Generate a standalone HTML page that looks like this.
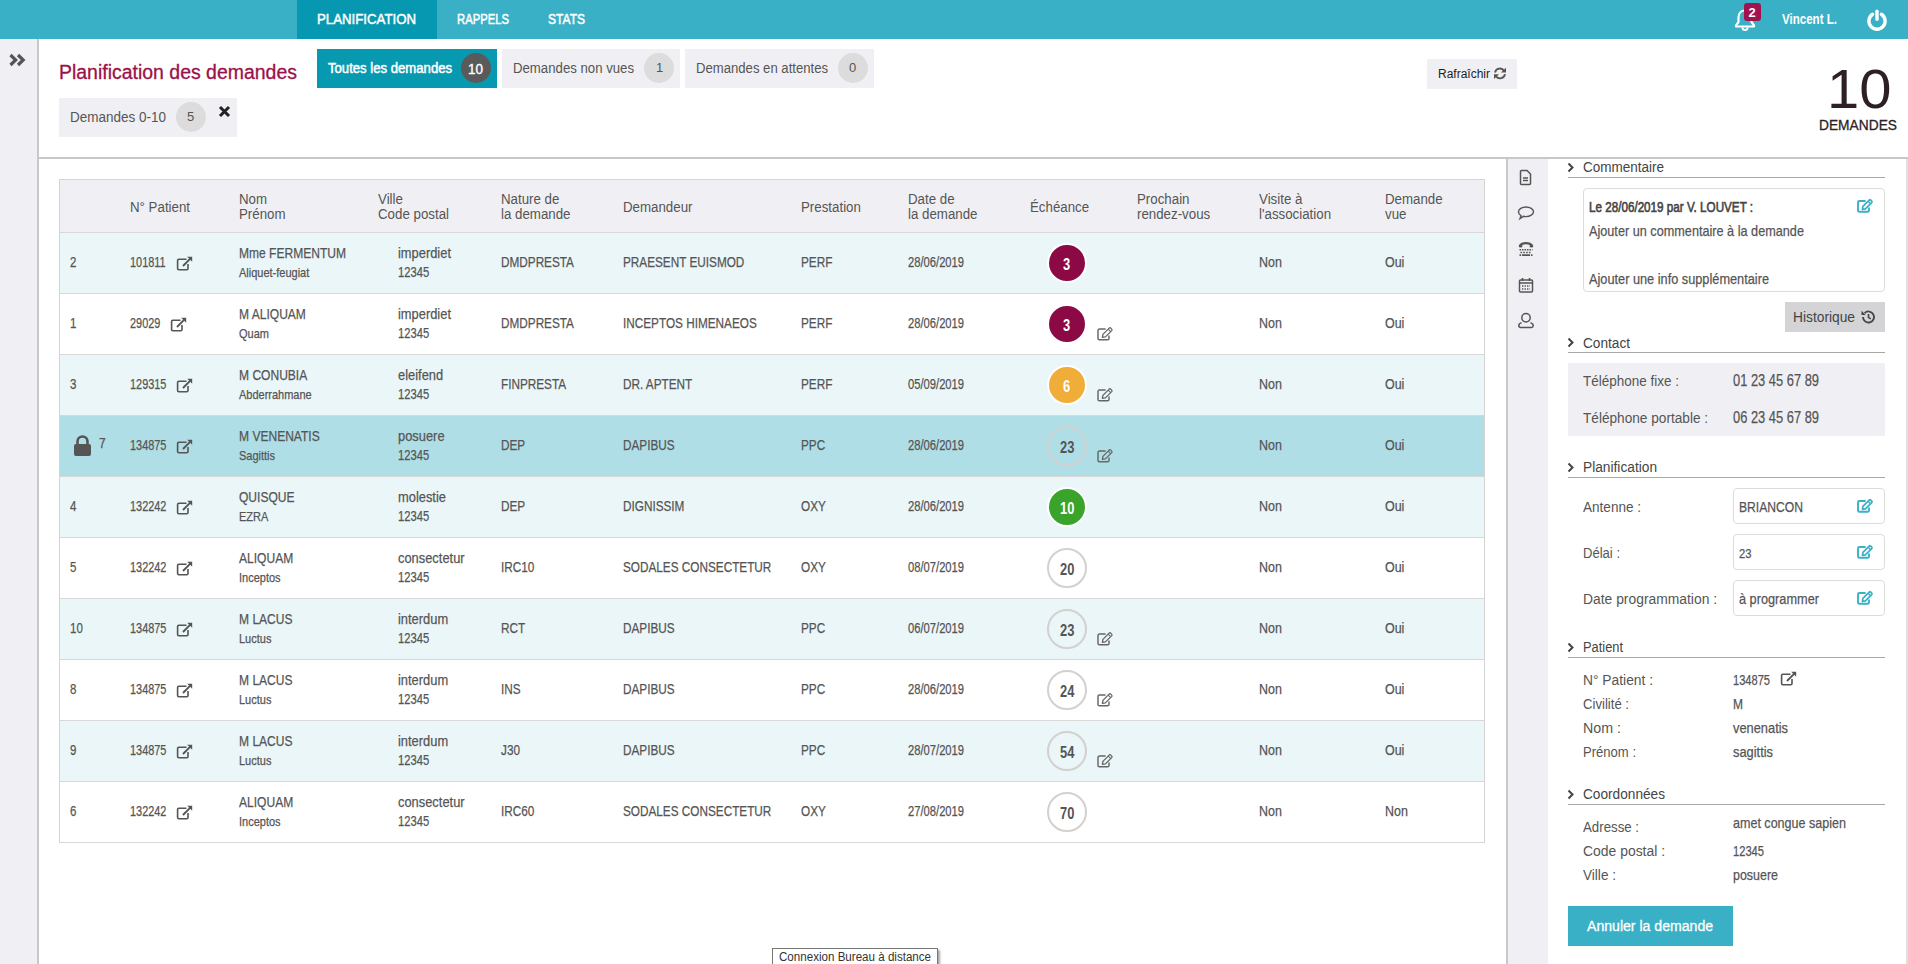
<!DOCTYPE html>
<html><head><meta charset="utf-8"><title>Planification</title>
<style>
html,body{margin:0;padding:0;}
body{width:1908px;height:964px;overflow:hidden;position:relative;background:#fff;font-family:"Liberation Sans",sans-serif;}
.t{position:absolute;white-space:nowrap;line-height:1;transform-origin:0 0;}
.b{position:absolute;}
svg.b{overflow:visible;}
</style></head><body>
<div class="b" style="left:0px;top:0px;width:1908px;height:39px;background:#3ab0c6;"></div>
<div class="b" style="left:297px;top:0px;width:140px;height:39px;background:#0698b0;"></div>
<div class="t" style="left:317px;top:10.70px;font-size:15px;color:#fff;transform:scaleX(0.8822);-webkit-text-stroke:0.5px #fff;">PLANIFICATION</div>
<div class="t" style="left:456.5px;top:10.70px;font-size:15px;color:#fff;transform:scaleX(0.7518);-webkit-text-stroke:0.5px #fff;">RAPPELS</div>
<div class="t" style="left:548px;top:10.70px;font-size:15px;color:#fff;transform:scaleX(0.8027);-webkit-text-stroke:0.5px #fff;">STATS</div>
<svg class="b" style="left:1734px;top:8px" width="22" height="23" viewBox="0 0 22 23"><path d="M11 2.5c-4 0-6.5 3-6.5 6.8v4.7L2 17.3v1.2h18v-1.2l-2.5-3.3V9.3C17.5 5.5 15 2.5 11 2.5z" fill="none" stroke="#fff" stroke-width="2.2" stroke-linejoin="round"/><path d="M8.5 19.5a2.5 2.5 0 0 0 5 0" fill="none" stroke="#fff" stroke-width="2"/></svg>
<div class="b" style="left:1744px;top:3px;width:17px;height:18px;background:#a0134f;border-radius:3px;"></div>
<div class="t" style="left:1748.5px;top:6.00px;font-size:13px;color:#fff;font-weight:bold;">2</div>
<div class="t" style="left:1782px;top:11.30px;font-size:15px;color:#fff;font-weight:bold;transform:scaleX(0.7702);">Vincent L.</div>
<svg class="b" style="left:1865px;top:8px" width="24" height="24" viewBox="0 0 24 24"><path d="M7.6 6.3A8.1 8.1 0 1 0 16.4 6.3" fill="none" stroke="#fff" stroke-width="3.4" stroke-linecap="round"/><path d="M12 3.2v8" stroke="#fff" stroke-width="3.4" stroke-linecap="round"/></svg>
<div class="b" style="left:0px;top:39px;width:37px;height:925px;background:#f0f0f4;"></div>
<div class="b" style="left:37px;top:39px;width:2px;height:925px;background:#c8c8c8;"></div>
<svg class="b" style="left:8px;top:52px" width="18" height="16" viewBox="0 0 18 16"><path d="M2.5 3l5.2 5-5.2 5M10 3l5.2 5-5.2 5" fill="none" stroke="#555" stroke-width="3.2"/></svg>
<div class="t" style="left:59px;top:62.07px;font-size:20px;color:#9b1049;transform:scaleX(0.9729);-webkit-text-stroke:0.3px #9b1049;">Planification des demandes</div>
<div class="b" style="left:317px;top:49px;width:180px;height:39px;background:#0799b0;"></div>
<div class="t" style="left:327.5px;top:61.15px;font-size:14px;color:#fff;transform:scaleX(0.9376);-webkit-text-stroke:0.5px #fff;">Toutes les demandes</div>
<div class="b" style="left:461px;top:53px;width:30px;height:30px;background:#5a5a5a;border-radius:50%;"></div>
<div class="t" style="left:468px;top:61.65px;font-size:14px;color:#fff;transform:scaleX(0.9639);-webkit-text-stroke:0.35px #fff;">10</div>
<div class="b" style="left:502px;top:49px;width:178px;height:39px;background:#f0f0f4;"></div>
<div class="t" style="left:512.5px;top:61.15px;font-size:14px;color:#555;transform:scaleX(0.9427);">Demandes non vues</div>
<div class="b" style="left:644px;top:53px;width:30px;height:30px;background:#dcdcdc;border-radius:50%;"></div>
<div class="t" style="left:656px;top:61.00px;font-size:13px;color:#555;">1</div>
<div class="b" style="left:685px;top:49px;width:189px;height:39px;background:#f0f0f4;"></div>
<div class="t" style="left:695.5px;top:61.15px;font-size:14px;color:#555;transform:scaleX(0.9374);">Demandes en attentes</div>
<div class="b" style="left:838px;top:53px;width:30px;height:30px;background:#dcdcdc;border-radius:50%;"></div>
<div class="t" style="left:849px;top:61.00px;font-size:13px;color:#555;">0</div>
<div class="b" style="left:59px;top:98px;width:178px;height:39px;background:#f0f0f4;"></div>
<div class="t" style="left:69.5px;top:110.15px;font-size:14px;color:#555;transform:scaleX(0.9642);">Demandes 0-10</div>
<div class="b" style="left:176px;top:102px;width:30px;height:30px;background:#dcdcdc;border-radius:50%;"></div>
<div class="t" style="left:187px;top:110.00px;font-size:13px;color:#555;">5</div>
<svg class="b" style="left:218px;top:105px" width="13" height="13" viewBox="0 0 13 13"><path d="M2 2l9 9M11 2l-9 9" stroke="#222" stroke-width="3"/></svg>
<div class="b" style="left:1427px;top:59px;width:90px;height:30px;background:#f0f0f4;"></div>
<div class="t" style="left:1438px;top:67.84px;font-size:12px;color:#222;">Rafraîchir</div>
<svg class="b" style="left:1493px;top:66px" width="14" height="15" viewBox="0 0 14 15"><path d="M2 6.5A5 5 0 0 1 11 4.6" fill="none" stroke="#555" stroke-width="1.9"/><path d="M8 6.5H13V1.7z" fill="#555"/><path d="M12 8.2A5 5 0 0 1 3 10.2" fill="none" stroke="#555" stroke-width="1.9"/><path d="M6 8.2H1V13z" fill="#555"/></svg>
<div class="t" style="left:1826.5px;top:61.94px;font-size:55px;color:#2d1f25;transform:scaleX(1.0541);">10</div>
<div class="t" style="left:1819px;top:118.15px;font-size:14px;color:#2d1f25;transform:scaleX(0.9829);-webkit-text-stroke:0.3px #2d1f25;">DEMANDES</div>
<div class="b" style="left:39px;top:157px;width:1869px;height:2px;background:#c8c8c8;"></div>
<div class="b" style="left:59px;top:179px;width:1426px;height:664px;background:#fff;border:1px solid #d4d4d4;box-sizing:border-box;"></div>
<div class="b" style="left:60px;top:180px;width:1424px;height:53px;background:#f0f0f4;"></div>
<div class="b" style="left:60px;top:232px;width:1424px;height:1px;background:#d8d8d8;"></div>
<div class="t" style="left:129.5px;top:199.65px;font-size:14px;color:#555;transform:scaleX(0.9500);">N° Patient</div>
<div class="t" style="left:239px;top:191.65px;font-size:14px;color:#555;transform:scaleX(0.9500);">Nom</div>
<div class="t" style="left:239px;top:207.15px;font-size:14px;color:#555;transform:scaleX(0.9500);">Prénom</div>
<div class="t" style="left:378px;top:191.65px;font-size:14px;color:#555;transform:scaleX(0.9500);">Ville</div>
<div class="t" style="left:378px;top:207.15px;font-size:14px;color:#555;transform:scaleX(0.9500);">Code postal</div>
<div class="t" style="left:501px;top:191.65px;font-size:14px;color:#555;transform:scaleX(0.9500);">Nature de</div>
<div class="t" style="left:501px;top:207.15px;font-size:14px;color:#555;transform:scaleX(0.9500);">la demande</div>
<div class="t" style="left:623px;top:199.65px;font-size:14px;color:#555;transform:scaleX(0.9500);">Demandeur</div>
<div class="t" style="left:801px;top:199.65px;font-size:14px;color:#555;transform:scaleX(0.9500);">Prestation</div>
<div class="t" style="left:908px;top:191.65px;font-size:14px;color:#555;transform:scaleX(0.9500);">Date de</div>
<div class="t" style="left:908px;top:207.15px;font-size:14px;color:#555;transform:scaleX(0.9500);">la demande</div>
<div class="t" style="left:1030px;top:199.65px;font-size:14px;color:#555;transform:scaleX(0.9500);">Échéance</div>
<div class="t" style="left:1137px;top:191.65px;font-size:14px;color:#555;transform:scaleX(0.9500);">Prochain</div>
<div class="t" style="left:1137px;top:207.15px;font-size:14px;color:#555;transform:scaleX(0.9500);">rendez-vous</div>
<div class="t" style="left:1259px;top:191.65px;font-size:14px;color:#555;transform:scaleX(0.9500);">Visite à</div>
<div class="t" style="left:1259px;top:207.15px;font-size:14px;color:#555;transform:scaleX(0.9500);">l'association</div>
<div class="t" style="left:1385px;top:191.65px;font-size:14px;color:#555;transform:scaleX(0.9500);">Demande</div>
<div class="t" style="left:1385px;top:207.15px;font-size:14px;color:#555;transform:scaleX(0.9500);">vue</div>
<div class="b" style="left:60px;top:233px;width:1424px;height:60px;background:#eaf6f8;"></div>
<div class="b" style="left:60px;top:293px;width:1424px;height:1px;background:#d8d8d8;"></div>
<div class="t" style="left:70px;top:254.30px;font-size:15px;color:#555;transform:scaleX(0.7653);-webkit-text-stroke:0.25px #555;">2</div>
<div class="t" style="left:130px;top:254.30px;font-size:15px;color:#555;transform:scaleX(0.7280);-webkit-text-stroke:0.25px #555;">101811</div>
<svg class="b" style="left:176px;top:256px" width="17" height="15" viewBox="0 0 17 15"><path d="M10.5 3.3H2.8a1.2 1.2 0 0 0-1.2 1.2v8a1.2 1.2 0 0 0 1.2 1.2h8a1.2 1.2 0 0 0 1.2-1.2V8" fill="none" stroke="#555" stroke-width="1.6"/><path d="M7 10L14.3 2.7" stroke="#555" stroke-width="1.9"/><path d="M11.2 0.8h5v5z" fill="#555"/></svg>
<div class="t" style="left:239px;top:245.30px;font-size:15px;color:#555;transform:scaleX(0.8027);-webkit-text-stroke:0.25px #555;">Mme FERMENTUM</div>
<div class="t" style="left:239px;top:266.00px;font-size:13px;color:#555;transform:scaleX(0.8454);-webkit-text-stroke:0.25px #555;">Aliquet-feugiat</div>
<div class="t" style="left:398px;top:245.30px;font-size:15px;color:#555;transform:scaleX(0.8587);-webkit-text-stroke:0.25px #555;">imperdiet</div>
<div class="t" style="left:398px;top:265.15px;font-size:14px;color:#555;transform:scaleX(0.8000);-webkit-text-stroke:0.25px #555;">12345</div>
<div class="t" style="left:501px;top:254.30px;font-size:15px;color:#555;transform:scaleX(0.7840);-webkit-text-stroke:0.25px #555;">DMDPRESTA</div>
<div class="t" style="left:623px;top:254.30px;font-size:15px;color:#555;transform:scaleX(0.7840);-webkit-text-stroke:0.25px #555;">PRAESENT EUISMOD</div>
<div class="t" style="left:801px;top:254.30px;font-size:15px;color:#555;transform:scaleX(0.7840);-webkit-text-stroke:0.25px #555;">PERF</div>
<div class="t" style="left:908px;top:255.15px;font-size:14px;color:#555;transform:scaleX(0.8000);-webkit-text-stroke:0.25px #555;">28/06/2019</div>
<div class="b" style="left:1047px;top:243px;width:40px;height:40px;background:#8b0a45;border:2px solid #fff;box-sizing:border-box;border-radius:50%;"></div>
<div class="t" style="left:1063.4078125px;top:255.61px;font-size:17px;color:#fff;font-weight:bold;transform:scaleX(0.7600);">3</div>
<div class="t" style="left:1259px;top:254.30px;font-size:15px;color:#555;transform:scaleX(0.8307);-webkit-text-stroke:0.25px #555;">Non</div>
<div class="t" style="left:1385px;top:254.30px;font-size:15px;color:#555;transform:scaleX(0.8307);-webkit-text-stroke:0.25px #555;">Oui</div>
<div class="b" style="left:60px;top:294px;width:1424px;height:60px;background:#ffffff;"></div>
<div class="b" style="left:60px;top:354px;width:1424px;height:1px;background:#d8d8d8;"></div>
<div class="t" style="left:70px;top:315.30px;font-size:15px;color:#555;transform:scaleX(0.7653);-webkit-text-stroke:0.25px #555;">1</div>
<div class="t" style="left:130px;top:315.30px;font-size:15px;color:#555;transform:scaleX(0.7280);-webkit-text-stroke:0.25px #555;">29029</div>
<svg class="b" style="left:170px;top:317px" width="17" height="15" viewBox="0 0 17 15"><path d="M10.5 3.3H2.8a1.2 1.2 0 0 0-1.2 1.2v8a1.2 1.2 0 0 0 1.2 1.2h8a1.2 1.2 0 0 0 1.2-1.2V8" fill="none" stroke="#555" stroke-width="1.6"/><path d="M7 10L14.3 2.7" stroke="#555" stroke-width="1.9"/><path d="M11.2 0.8h5v5z" fill="#555"/></svg>
<div class="t" style="left:239px;top:306.30px;font-size:15px;color:#555;transform:scaleX(0.8027);-webkit-text-stroke:0.25px #555;">M ALIQUAM</div>
<div class="t" style="left:239px;top:327.00px;font-size:13px;color:#555;transform:scaleX(0.8454);-webkit-text-stroke:0.25px #555;">Quam</div>
<div class="t" style="left:398px;top:306.30px;font-size:15px;color:#555;transform:scaleX(0.8587);-webkit-text-stroke:0.25px #555;">imperdiet</div>
<div class="t" style="left:398px;top:326.15px;font-size:14px;color:#555;transform:scaleX(0.8000);-webkit-text-stroke:0.25px #555;">12345</div>
<div class="t" style="left:501px;top:315.30px;font-size:15px;color:#555;transform:scaleX(0.7840);-webkit-text-stroke:0.25px #555;">DMDPRESTA</div>
<div class="t" style="left:623px;top:315.30px;font-size:15px;color:#555;transform:scaleX(0.7840);-webkit-text-stroke:0.25px #555;">INCEPTOS HIMENAEOS</div>
<div class="t" style="left:801px;top:315.30px;font-size:15px;color:#555;transform:scaleX(0.7840);-webkit-text-stroke:0.25px #555;">PERF</div>
<div class="t" style="left:908px;top:316.15px;font-size:14px;color:#555;transform:scaleX(0.8000);-webkit-text-stroke:0.25px #555;">28/06/2019</div>
<div class="b" style="left:1047px;top:304px;width:40px;height:40px;background:#8b0a45;border:2px solid #fff;box-sizing:border-box;border-radius:50%;"></div>
<div class="t" style="left:1063.4078125px;top:316.61px;font-size:17px;color:#fff;font-weight:bold;transform:scaleX(0.7600);">3</div>
<svg class="b" style="left:1097px;top:327px" width="16" height="15" viewBox="0 0 16 15"><path d="M8.6 2H2.4A1.4 1.4 0 0 0 1 3.4v8A1.4 1.4 0 0 0 2.4 12.8h8.2A1.4 1.4 0 0 0 12 11.4V8.6" fill="none" stroke="#666" stroke-width="1.45"/><path d="M5.4 10.3l.5-2.9 6.3-6.3a1.1 1.1 0 0 1 1.5 0l1 1a1.1 1.1 0 0 1 0 1.5L8.4 9.9z" fill="none" stroke="#666" stroke-width="1.3" stroke-linejoin="round"/><path d="M11.2 2.2l2.5 2.5" stroke="#666" stroke-width="1.1"/></svg>
<div class="t" style="left:1259px;top:315.30px;font-size:15px;color:#555;transform:scaleX(0.8307);-webkit-text-stroke:0.25px #555;">Non</div>
<div class="t" style="left:1385px;top:315.30px;font-size:15px;color:#555;transform:scaleX(0.8307);-webkit-text-stroke:0.25px #555;">Oui</div>
<div class="b" style="left:60px;top:355px;width:1424px;height:60px;background:#eaf6f8;"></div>
<div class="b" style="left:60px;top:415px;width:1424px;height:1px;background:#d8d8d8;"></div>
<div class="t" style="left:70px;top:376.30px;font-size:15px;color:#555;transform:scaleX(0.7653);-webkit-text-stroke:0.25px #555;">3</div>
<div class="t" style="left:130px;top:376.30px;font-size:15px;color:#555;transform:scaleX(0.7280);-webkit-text-stroke:0.25px #555;">129315</div>
<svg class="b" style="left:176px;top:378px" width="17" height="15" viewBox="0 0 17 15"><path d="M10.5 3.3H2.8a1.2 1.2 0 0 0-1.2 1.2v8a1.2 1.2 0 0 0 1.2 1.2h8a1.2 1.2 0 0 0 1.2-1.2V8" fill="none" stroke="#555" stroke-width="1.6"/><path d="M7 10L14.3 2.7" stroke="#555" stroke-width="1.9"/><path d="M11.2 0.8h5v5z" fill="#555"/></svg>
<div class="t" style="left:239px;top:367.30px;font-size:15px;color:#555;transform:scaleX(0.8027);-webkit-text-stroke:0.25px #555;">M CONUBIA</div>
<div class="t" style="left:239px;top:388.00px;font-size:13px;color:#555;transform:scaleX(0.8454);-webkit-text-stroke:0.25px #555;">Abderrahmane</div>
<div class="t" style="left:398px;top:367.30px;font-size:15px;color:#555;transform:scaleX(0.8587);-webkit-text-stroke:0.25px #555;">eleifend</div>
<div class="t" style="left:398px;top:387.15px;font-size:14px;color:#555;transform:scaleX(0.8000);-webkit-text-stroke:0.25px #555;">12345</div>
<div class="t" style="left:501px;top:376.30px;font-size:15px;color:#555;transform:scaleX(0.7840);-webkit-text-stroke:0.25px #555;">FINPRESTA</div>
<div class="t" style="left:623px;top:376.30px;font-size:15px;color:#555;transform:scaleX(0.7840);-webkit-text-stroke:0.25px #555;">DR. APTENT</div>
<div class="t" style="left:801px;top:376.30px;font-size:15px;color:#555;transform:scaleX(0.7840);-webkit-text-stroke:0.25px #555;">PERF</div>
<div class="t" style="left:908px;top:377.15px;font-size:14px;color:#555;transform:scaleX(0.8000);-webkit-text-stroke:0.25px #555;">05/09/2019</div>
<div class="b" style="left:1047px;top:365px;width:40px;height:40px;background:#f0ad3a;border:2px solid #fff;box-sizing:border-box;border-radius:50%;"></div>
<div class="t" style="left:1063.4078125px;top:377.61px;font-size:17px;color:#fff;font-weight:bold;transform:scaleX(0.7600);">6</div>
<svg class="b" style="left:1097px;top:388px" width="16" height="15" viewBox="0 0 16 15"><path d="M8.6 2H2.4A1.4 1.4 0 0 0 1 3.4v8A1.4 1.4 0 0 0 2.4 12.8h8.2A1.4 1.4 0 0 0 12 11.4V8.6" fill="none" stroke="#666" stroke-width="1.45"/><path d="M5.4 10.3l.5-2.9 6.3-6.3a1.1 1.1 0 0 1 1.5 0l1 1a1.1 1.1 0 0 1 0 1.5L8.4 9.9z" fill="none" stroke="#666" stroke-width="1.3" stroke-linejoin="round"/><path d="M11.2 2.2l2.5 2.5" stroke="#666" stroke-width="1.1"/></svg>
<div class="t" style="left:1259px;top:376.30px;font-size:15px;color:#555;transform:scaleX(0.8307);-webkit-text-stroke:0.25px #555;">Non</div>
<div class="t" style="left:1385px;top:376.30px;font-size:15px;color:#555;transform:scaleX(0.8307);-webkit-text-stroke:0.25px #555;">Oui</div>
<div class="b" style="left:60px;top:416px;width:1424px;height:60px;background:#b0dee6;"></div>
<div class="b" style="left:60px;top:476px;width:1424px;height:1px;background:#d8d8d8;"></div>
<svg class="b" style="left:73px;top:435px" width="19" height="21" viewBox="0 0 19 21"><path d="M4.5 9V6.5a5 5 0 0 1 10 0V9" fill="none" stroke="#555" stroke-width="2.6"/><rect x="1" y="9" width="17" height="12" rx="2" fill="#555"/></svg>
<div class="t" style="left:99px;top:435.65px;font-size:14px;color:#555;transform:scaleX(0.8500);-webkit-text-stroke:0.25px #555;">7</div>
<div class="t" style="left:130px;top:437.30px;font-size:15px;color:#555;transform:scaleX(0.7280);-webkit-text-stroke:0.25px #555;">134875</div>
<svg class="b" style="left:176px;top:439px" width="17" height="15" viewBox="0 0 17 15"><path d="M10.5 3.3H2.8a1.2 1.2 0 0 0-1.2 1.2v8a1.2 1.2 0 0 0 1.2 1.2h8a1.2 1.2 0 0 0 1.2-1.2V8" fill="none" stroke="#555" stroke-width="1.6"/><path d="M7 10L14.3 2.7" stroke="#555" stroke-width="1.9"/><path d="M11.2 0.8h5v5z" fill="#555"/></svg>
<div class="t" style="left:239px;top:428.30px;font-size:15px;color:#555;transform:scaleX(0.8027);-webkit-text-stroke:0.25px #555;">M VENENATIS</div>
<div class="t" style="left:239px;top:449.00px;font-size:13px;color:#555;transform:scaleX(0.8454);-webkit-text-stroke:0.25px #555;">Sagittis</div>
<div class="t" style="left:398px;top:428.30px;font-size:15px;color:#555;transform:scaleX(0.8587);-webkit-text-stroke:0.25px #555;">posuere</div>
<div class="t" style="left:398px;top:448.15px;font-size:14px;color:#555;transform:scaleX(0.8000);-webkit-text-stroke:0.25px #555;">12345</div>
<div class="t" style="left:501px;top:437.30px;font-size:15px;color:#555;transform:scaleX(0.7840);-webkit-text-stroke:0.25px #555;">DEP</div>
<div class="t" style="left:623px;top:437.30px;font-size:15px;color:#555;transform:scaleX(0.7840);-webkit-text-stroke:0.25px #555;">DAPIBUS</div>
<div class="t" style="left:801px;top:437.30px;font-size:15px;color:#555;transform:scaleX(0.7840);-webkit-text-stroke:0.25px #555;">PPC</div>
<div class="t" style="left:908px;top:438.15px;font-size:14px;color:#555;transform:scaleX(0.8000);-webkit-text-stroke:0.25px #555;">28/06/2019</div>
<div class="b" style="left:1047px;top:426px;width:40px;height:40px;background:transparent;border:2px solid #d3d0d0;box-sizing:border-box;border-radius:50%;"></div>
<div class="t" style="left:1059.815625px;top:438.61px;font-size:17px;color:#555;font-weight:bold;transform:scaleX(0.7600);">23</div>
<svg class="b" style="left:1097px;top:449px" width="16" height="15" viewBox="0 0 16 15"><path d="M8.6 2H2.4A1.4 1.4 0 0 0 1 3.4v8A1.4 1.4 0 0 0 2.4 12.8h8.2A1.4 1.4 0 0 0 12 11.4V8.6" fill="none" stroke="#666" stroke-width="1.45"/><path d="M5.4 10.3l.5-2.9 6.3-6.3a1.1 1.1 0 0 1 1.5 0l1 1a1.1 1.1 0 0 1 0 1.5L8.4 9.9z" fill="none" stroke="#666" stroke-width="1.3" stroke-linejoin="round"/><path d="M11.2 2.2l2.5 2.5" stroke="#666" stroke-width="1.1"/></svg>
<div class="t" style="left:1259px;top:437.30px;font-size:15px;color:#555;transform:scaleX(0.8307);-webkit-text-stroke:0.25px #555;">Non</div>
<div class="t" style="left:1385px;top:437.30px;font-size:15px;color:#555;transform:scaleX(0.8307);-webkit-text-stroke:0.25px #555;">Oui</div>
<div class="b" style="left:60px;top:477px;width:1424px;height:60px;background:#eaf6f8;"></div>
<div class="b" style="left:60px;top:537px;width:1424px;height:1px;background:#d8d8d8;"></div>
<div class="t" style="left:70px;top:498.30px;font-size:15px;color:#555;transform:scaleX(0.7653);-webkit-text-stroke:0.25px #555;">4</div>
<div class="t" style="left:130px;top:498.30px;font-size:15px;color:#555;transform:scaleX(0.7280);-webkit-text-stroke:0.25px #555;">132242</div>
<svg class="b" style="left:176px;top:500px" width="17" height="15" viewBox="0 0 17 15"><path d="M10.5 3.3H2.8a1.2 1.2 0 0 0-1.2 1.2v8a1.2 1.2 0 0 0 1.2 1.2h8a1.2 1.2 0 0 0 1.2-1.2V8" fill="none" stroke="#555" stroke-width="1.6"/><path d="M7 10L14.3 2.7" stroke="#555" stroke-width="1.9"/><path d="M11.2 0.8h5v5z" fill="#555"/></svg>
<div class="t" style="left:239px;top:489.30px;font-size:15px;color:#555;transform:scaleX(0.8027);-webkit-text-stroke:0.25px #555;">QUISQUE</div>
<div class="t" style="left:239px;top:510.00px;font-size:13px;color:#555;transform:scaleX(0.8454);-webkit-text-stroke:0.25px #555;">EZRA</div>
<div class="t" style="left:398px;top:489.30px;font-size:15px;color:#555;transform:scaleX(0.8587);-webkit-text-stroke:0.25px #555;">molestie</div>
<div class="t" style="left:398px;top:509.15px;font-size:14px;color:#555;transform:scaleX(0.8000);-webkit-text-stroke:0.25px #555;">12345</div>
<div class="t" style="left:501px;top:498.30px;font-size:15px;color:#555;transform:scaleX(0.7840);-webkit-text-stroke:0.25px #555;">DEP</div>
<div class="t" style="left:623px;top:498.30px;font-size:15px;color:#555;transform:scaleX(0.7840);-webkit-text-stroke:0.25px #555;">DIGNISSIM</div>
<div class="t" style="left:801px;top:498.30px;font-size:15px;color:#555;transform:scaleX(0.7840);-webkit-text-stroke:0.25px #555;">OXY</div>
<div class="t" style="left:908px;top:499.15px;font-size:14px;color:#555;transform:scaleX(0.8000);-webkit-text-stroke:0.25px #555;">28/06/2019</div>
<div class="b" style="left:1047px;top:487px;width:40px;height:40px;background:#3aa42a;border:2px solid #fff;box-sizing:border-box;border-radius:50%;"></div>
<div class="t" style="left:1059.815625px;top:499.61px;font-size:17px;color:#fff;font-weight:bold;transform:scaleX(0.7600);">10</div>
<div class="t" style="left:1259px;top:498.30px;font-size:15px;color:#555;transform:scaleX(0.8307);-webkit-text-stroke:0.25px #555;">Non</div>
<div class="t" style="left:1385px;top:498.30px;font-size:15px;color:#555;transform:scaleX(0.8307);-webkit-text-stroke:0.25px #555;">Oui</div>
<div class="b" style="left:60px;top:538px;width:1424px;height:60px;background:#ffffff;"></div>
<div class="b" style="left:60px;top:598px;width:1424px;height:1px;background:#d8d8d8;"></div>
<div class="t" style="left:70px;top:559.30px;font-size:15px;color:#555;transform:scaleX(0.7653);-webkit-text-stroke:0.25px #555;">5</div>
<div class="t" style="left:130px;top:559.30px;font-size:15px;color:#555;transform:scaleX(0.7280);-webkit-text-stroke:0.25px #555;">132242</div>
<svg class="b" style="left:176px;top:561px" width="17" height="15" viewBox="0 0 17 15"><path d="M10.5 3.3H2.8a1.2 1.2 0 0 0-1.2 1.2v8a1.2 1.2 0 0 0 1.2 1.2h8a1.2 1.2 0 0 0 1.2-1.2V8" fill="none" stroke="#555" stroke-width="1.6"/><path d="M7 10L14.3 2.7" stroke="#555" stroke-width="1.9"/><path d="M11.2 0.8h5v5z" fill="#555"/></svg>
<div class="t" style="left:239px;top:550.30px;font-size:15px;color:#555;transform:scaleX(0.8027);-webkit-text-stroke:0.25px #555;">ALIQUAM</div>
<div class="t" style="left:239px;top:571.00px;font-size:13px;color:#555;transform:scaleX(0.8454);-webkit-text-stroke:0.25px #555;">Inceptos</div>
<div class="t" style="left:398px;top:550.30px;font-size:15px;color:#555;transform:scaleX(0.8587);-webkit-text-stroke:0.25px #555;">consectetur</div>
<div class="t" style="left:398px;top:570.15px;font-size:14px;color:#555;transform:scaleX(0.8000);-webkit-text-stroke:0.25px #555;">12345</div>
<div class="t" style="left:501px;top:559.30px;font-size:15px;color:#555;transform:scaleX(0.7840);-webkit-text-stroke:0.25px #555;">IRC10</div>
<div class="t" style="left:623px;top:559.30px;font-size:15px;color:#555;transform:scaleX(0.7840);-webkit-text-stroke:0.25px #555;">SODALES CONSECTETUR</div>
<div class="t" style="left:801px;top:559.30px;font-size:15px;color:#555;transform:scaleX(0.7840);-webkit-text-stroke:0.25px #555;">OXY</div>
<div class="t" style="left:908px;top:560.15px;font-size:14px;color:#555;transform:scaleX(0.8000);-webkit-text-stroke:0.25px #555;">08/07/2019</div>
<div class="b" style="left:1047px;top:548px;width:40px;height:40px;background:transparent;border:2px solid #d3d0d0;box-sizing:border-box;border-radius:50%;"></div>
<div class="t" style="left:1059.815625px;top:560.61px;font-size:17px;color:#555;font-weight:bold;transform:scaleX(0.7600);">20</div>
<div class="t" style="left:1259px;top:559.30px;font-size:15px;color:#555;transform:scaleX(0.8307);-webkit-text-stroke:0.25px #555;">Non</div>
<div class="t" style="left:1385px;top:559.30px;font-size:15px;color:#555;transform:scaleX(0.8307);-webkit-text-stroke:0.25px #555;">Oui</div>
<div class="b" style="left:60px;top:599px;width:1424px;height:60px;background:#eaf6f8;"></div>
<div class="b" style="left:60px;top:659px;width:1424px;height:1px;background:#d8d8d8;"></div>
<div class="t" style="left:70px;top:620.30px;font-size:15px;color:#555;transform:scaleX(0.7653);-webkit-text-stroke:0.25px #555;">10</div>
<div class="t" style="left:130px;top:620.30px;font-size:15px;color:#555;transform:scaleX(0.7280);-webkit-text-stroke:0.25px #555;">134875</div>
<svg class="b" style="left:176px;top:622px" width="17" height="15" viewBox="0 0 17 15"><path d="M10.5 3.3H2.8a1.2 1.2 0 0 0-1.2 1.2v8a1.2 1.2 0 0 0 1.2 1.2h8a1.2 1.2 0 0 0 1.2-1.2V8" fill="none" stroke="#555" stroke-width="1.6"/><path d="M7 10L14.3 2.7" stroke="#555" stroke-width="1.9"/><path d="M11.2 0.8h5v5z" fill="#555"/></svg>
<div class="t" style="left:239px;top:611.30px;font-size:15px;color:#555;transform:scaleX(0.8027);-webkit-text-stroke:0.25px #555;">M LACUS</div>
<div class="t" style="left:239px;top:632.00px;font-size:13px;color:#555;transform:scaleX(0.8454);-webkit-text-stroke:0.25px #555;">Luctus</div>
<div class="t" style="left:398px;top:611.30px;font-size:15px;color:#555;transform:scaleX(0.8587);-webkit-text-stroke:0.25px #555;">interdum</div>
<div class="t" style="left:398px;top:631.15px;font-size:14px;color:#555;transform:scaleX(0.8000);-webkit-text-stroke:0.25px #555;">12345</div>
<div class="t" style="left:501px;top:620.30px;font-size:15px;color:#555;transform:scaleX(0.7840);-webkit-text-stroke:0.25px #555;">RCT</div>
<div class="t" style="left:623px;top:620.30px;font-size:15px;color:#555;transform:scaleX(0.7840);-webkit-text-stroke:0.25px #555;">DAPIBUS</div>
<div class="t" style="left:801px;top:620.30px;font-size:15px;color:#555;transform:scaleX(0.7840);-webkit-text-stroke:0.25px #555;">PPC</div>
<div class="t" style="left:908px;top:621.15px;font-size:14px;color:#555;transform:scaleX(0.8000);-webkit-text-stroke:0.25px #555;">06/07/2019</div>
<div class="b" style="left:1047px;top:609px;width:40px;height:40px;background:transparent;border:2px solid #d3d0d0;box-sizing:border-box;border-radius:50%;"></div>
<div class="t" style="left:1059.815625px;top:621.61px;font-size:17px;color:#555;font-weight:bold;transform:scaleX(0.7600);">23</div>
<svg class="b" style="left:1097px;top:632px" width="16" height="15" viewBox="0 0 16 15"><path d="M8.6 2H2.4A1.4 1.4 0 0 0 1 3.4v8A1.4 1.4 0 0 0 2.4 12.8h8.2A1.4 1.4 0 0 0 12 11.4V8.6" fill="none" stroke="#666" stroke-width="1.45"/><path d="M5.4 10.3l.5-2.9 6.3-6.3a1.1 1.1 0 0 1 1.5 0l1 1a1.1 1.1 0 0 1 0 1.5L8.4 9.9z" fill="none" stroke="#666" stroke-width="1.3" stroke-linejoin="round"/><path d="M11.2 2.2l2.5 2.5" stroke="#666" stroke-width="1.1"/></svg>
<div class="t" style="left:1259px;top:620.30px;font-size:15px;color:#555;transform:scaleX(0.8307);-webkit-text-stroke:0.25px #555;">Non</div>
<div class="t" style="left:1385px;top:620.30px;font-size:15px;color:#555;transform:scaleX(0.8307);-webkit-text-stroke:0.25px #555;">Oui</div>
<div class="b" style="left:60px;top:660px;width:1424px;height:60px;background:#ffffff;"></div>
<div class="b" style="left:60px;top:720px;width:1424px;height:1px;background:#d8d8d8;"></div>
<div class="t" style="left:70px;top:681.30px;font-size:15px;color:#555;transform:scaleX(0.7653);-webkit-text-stroke:0.25px #555;">8</div>
<div class="t" style="left:130px;top:681.30px;font-size:15px;color:#555;transform:scaleX(0.7280);-webkit-text-stroke:0.25px #555;">134875</div>
<svg class="b" style="left:176px;top:683px" width="17" height="15" viewBox="0 0 17 15"><path d="M10.5 3.3H2.8a1.2 1.2 0 0 0-1.2 1.2v8a1.2 1.2 0 0 0 1.2 1.2h8a1.2 1.2 0 0 0 1.2-1.2V8" fill="none" stroke="#555" stroke-width="1.6"/><path d="M7 10L14.3 2.7" stroke="#555" stroke-width="1.9"/><path d="M11.2 0.8h5v5z" fill="#555"/></svg>
<div class="t" style="left:239px;top:672.30px;font-size:15px;color:#555;transform:scaleX(0.8027);-webkit-text-stroke:0.25px #555;">M LACUS</div>
<div class="t" style="left:239px;top:693.00px;font-size:13px;color:#555;transform:scaleX(0.8454);-webkit-text-stroke:0.25px #555;">Luctus</div>
<div class="t" style="left:398px;top:672.30px;font-size:15px;color:#555;transform:scaleX(0.8587);-webkit-text-stroke:0.25px #555;">interdum</div>
<div class="t" style="left:398px;top:692.15px;font-size:14px;color:#555;transform:scaleX(0.8000);-webkit-text-stroke:0.25px #555;">12345</div>
<div class="t" style="left:501px;top:681.30px;font-size:15px;color:#555;transform:scaleX(0.7840);-webkit-text-stroke:0.25px #555;">INS</div>
<div class="t" style="left:623px;top:681.30px;font-size:15px;color:#555;transform:scaleX(0.7840);-webkit-text-stroke:0.25px #555;">DAPIBUS</div>
<div class="t" style="left:801px;top:681.30px;font-size:15px;color:#555;transform:scaleX(0.7840);-webkit-text-stroke:0.25px #555;">PPC</div>
<div class="t" style="left:908px;top:682.15px;font-size:14px;color:#555;transform:scaleX(0.8000);-webkit-text-stroke:0.25px #555;">28/06/2019</div>
<div class="b" style="left:1047px;top:670px;width:40px;height:40px;background:transparent;border:2px solid #d3d0d0;box-sizing:border-box;border-radius:50%;"></div>
<div class="t" style="left:1059.815625px;top:682.61px;font-size:17px;color:#555;font-weight:bold;transform:scaleX(0.7600);">24</div>
<svg class="b" style="left:1097px;top:693px" width="16" height="15" viewBox="0 0 16 15"><path d="M8.6 2H2.4A1.4 1.4 0 0 0 1 3.4v8A1.4 1.4 0 0 0 2.4 12.8h8.2A1.4 1.4 0 0 0 12 11.4V8.6" fill="none" stroke="#666" stroke-width="1.45"/><path d="M5.4 10.3l.5-2.9 6.3-6.3a1.1 1.1 0 0 1 1.5 0l1 1a1.1 1.1 0 0 1 0 1.5L8.4 9.9z" fill="none" stroke="#666" stroke-width="1.3" stroke-linejoin="round"/><path d="M11.2 2.2l2.5 2.5" stroke="#666" stroke-width="1.1"/></svg>
<div class="t" style="left:1259px;top:681.30px;font-size:15px;color:#555;transform:scaleX(0.8307);-webkit-text-stroke:0.25px #555;">Non</div>
<div class="t" style="left:1385px;top:681.30px;font-size:15px;color:#555;transform:scaleX(0.8307);-webkit-text-stroke:0.25px #555;">Oui</div>
<div class="b" style="left:60px;top:721px;width:1424px;height:60px;background:#eaf6f8;"></div>
<div class="b" style="left:60px;top:781px;width:1424px;height:1px;background:#d8d8d8;"></div>
<div class="t" style="left:70px;top:742.30px;font-size:15px;color:#555;transform:scaleX(0.7653);-webkit-text-stroke:0.25px #555;">9</div>
<div class="t" style="left:130px;top:742.30px;font-size:15px;color:#555;transform:scaleX(0.7280);-webkit-text-stroke:0.25px #555;">134875</div>
<svg class="b" style="left:176px;top:744px" width="17" height="15" viewBox="0 0 17 15"><path d="M10.5 3.3H2.8a1.2 1.2 0 0 0-1.2 1.2v8a1.2 1.2 0 0 0 1.2 1.2h8a1.2 1.2 0 0 0 1.2-1.2V8" fill="none" stroke="#555" stroke-width="1.6"/><path d="M7 10L14.3 2.7" stroke="#555" stroke-width="1.9"/><path d="M11.2 0.8h5v5z" fill="#555"/></svg>
<div class="t" style="left:239px;top:733.30px;font-size:15px;color:#555;transform:scaleX(0.8027);-webkit-text-stroke:0.25px #555;">M LACUS</div>
<div class="t" style="left:239px;top:754.00px;font-size:13px;color:#555;transform:scaleX(0.8454);-webkit-text-stroke:0.25px #555;">Luctus</div>
<div class="t" style="left:398px;top:733.30px;font-size:15px;color:#555;transform:scaleX(0.8587);-webkit-text-stroke:0.25px #555;">interdum</div>
<div class="t" style="left:398px;top:753.15px;font-size:14px;color:#555;transform:scaleX(0.8000);-webkit-text-stroke:0.25px #555;">12345</div>
<div class="t" style="left:501px;top:742.30px;font-size:15px;color:#555;transform:scaleX(0.7840);-webkit-text-stroke:0.25px #555;">J30</div>
<div class="t" style="left:623px;top:742.30px;font-size:15px;color:#555;transform:scaleX(0.7840);-webkit-text-stroke:0.25px #555;">DAPIBUS</div>
<div class="t" style="left:801px;top:742.30px;font-size:15px;color:#555;transform:scaleX(0.7840);-webkit-text-stroke:0.25px #555;">PPC</div>
<div class="t" style="left:908px;top:743.15px;font-size:14px;color:#555;transform:scaleX(0.8000);-webkit-text-stroke:0.25px #555;">28/07/2019</div>
<div class="b" style="left:1047px;top:731px;width:40px;height:40px;background:transparent;border:2px solid #d3d0d0;box-sizing:border-box;border-radius:50%;"></div>
<div class="t" style="left:1059.815625px;top:743.61px;font-size:17px;color:#555;font-weight:bold;transform:scaleX(0.7600);">54</div>
<svg class="b" style="left:1097px;top:754px" width="16" height="15" viewBox="0 0 16 15"><path d="M8.6 2H2.4A1.4 1.4 0 0 0 1 3.4v8A1.4 1.4 0 0 0 2.4 12.8h8.2A1.4 1.4 0 0 0 12 11.4V8.6" fill="none" stroke="#666" stroke-width="1.45"/><path d="M5.4 10.3l.5-2.9 6.3-6.3a1.1 1.1 0 0 1 1.5 0l1 1a1.1 1.1 0 0 1 0 1.5L8.4 9.9z" fill="none" stroke="#666" stroke-width="1.3" stroke-linejoin="round"/><path d="M11.2 2.2l2.5 2.5" stroke="#666" stroke-width="1.1"/></svg>
<div class="t" style="left:1259px;top:742.30px;font-size:15px;color:#555;transform:scaleX(0.8307);-webkit-text-stroke:0.25px #555;">Non</div>
<div class="t" style="left:1385px;top:742.30px;font-size:15px;color:#555;transform:scaleX(0.8307);-webkit-text-stroke:0.25px #555;">Oui</div>
<div class="b" style="left:60px;top:782px;width:1424px;height:60px;background:#ffffff;"></div>
<div class="b" style="left:60px;top:842px;width:1424px;height:1px;background:#d8d8d8;"></div>
<div class="t" style="left:70px;top:803.30px;font-size:15px;color:#555;transform:scaleX(0.7653);-webkit-text-stroke:0.25px #555;">6</div>
<div class="t" style="left:130px;top:803.30px;font-size:15px;color:#555;transform:scaleX(0.7280);-webkit-text-stroke:0.25px #555;">132242</div>
<svg class="b" style="left:176px;top:805px" width="17" height="15" viewBox="0 0 17 15"><path d="M10.5 3.3H2.8a1.2 1.2 0 0 0-1.2 1.2v8a1.2 1.2 0 0 0 1.2 1.2h8a1.2 1.2 0 0 0 1.2-1.2V8" fill="none" stroke="#555" stroke-width="1.6"/><path d="M7 10L14.3 2.7" stroke="#555" stroke-width="1.9"/><path d="M11.2 0.8h5v5z" fill="#555"/></svg>
<div class="t" style="left:239px;top:794.30px;font-size:15px;color:#555;transform:scaleX(0.8027);-webkit-text-stroke:0.25px #555;">ALIQUAM</div>
<div class="t" style="left:239px;top:815.00px;font-size:13px;color:#555;transform:scaleX(0.8454);-webkit-text-stroke:0.25px #555;">Inceptos</div>
<div class="t" style="left:398px;top:794.30px;font-size:15px;color:#555;transform:scaleX(0.8587);-webkit-text-stroke:0.25px #555;">consectetur</div>
<div class="t" style="left:398px;top:814.15px;font-size:14px;color:#555;transform:scaleX(0.8000);-webkit-text-stroke:0.25px #555;">12345</div>
<div class="t" style="left:501px;top:803.30px;font-size:15px;color:#555;transform:scaleX(0.7840);-webkit-text-stroke:0.25px #555;">IRC60</div>
<div class="t" style="left:623px;top:803.30px;font-size:15px;color:#555;transform:scaleX(0.7840);-webkit-text-stroke:0.25px #555;">SODALES CONSECTETUR</div>
<div class="t" style="left:801px;top:803.30px;font-size:15px;color:#555;transform:scaleX(0.7840);-webkit-text-stroke:0.25px #555;">OXY</div>
<div class="t" style="left:908px;top:804.15px;font-size:14px;color:#555;transform:scaleX(0.8000);-webkit-text-stroke:0.25px #555;">27/08/2019</div>
<div class="b" style="left:1047px;top:792px;width:40px;height:40px;background:transparent;border:2px solid #d3d0d0;box-sizing:border-box;border-radius:50%;"></div>
<div class="t" style="left:1059.815625px;top:804.61px;font-size:17px;color:#555;font-weight:bold;transform:scaleX(0.7600);">70</div>
<div class="t" style="left:1259px;top:803.30px;font-size:15px;color:#555;transform:scaleX(0.8307);-webkit-text-stroke:0.25px #555;">Non</div>
<div class="t" style="left:1385px;top:803.30px;font-size:15px;color:#555;transform:scaleX(0.8307);-webkit-text-stroke:0.25px #555;">Non</div>
<div class="b" style="left:1506px;top:159px;width:2px;height:805px;background:#c8c8c8;"></div>
<div class="b" style="left:1508px;top:159px;width:40px;height:805px;background:#f0f0f4;"></div>
<div class="b" style="left:1906px;top:159px;width:2px;height:805px;background:#e0e0e0;"></div>
<svg class="b" style="left:1519px;top:169px" width="13" height="16" viewBox="0 0 13 16"><path d="M1.5 2.5a1 1 0 0 1 1-1h5.5l3.5 3.5v9.5a1 1 0 0 1-1 1h-8a1 1 0 0 1-1-1z" fill="none" stroke="#555" stroke-width="1.5"/><path d="M4 9h5M4 11.5h5" stroke="#555" stroke-width="1.3"/></svg>
<svg class="b" style="left:1517px;top:205px" width="18" height="15" viewBox="0 0 18 15"><path d="M9 2C5 2 1.5 4.2 1.5 7c0 1.5 1 2.8 2.5 3.7L3 13.5l3.5-2.2c.8.2 1.6.3 2.5.3 4 0 7.5-2.2 7.5-4.8S13 2 9 2z" fill="none" stroke="#555" stroke-width="1.4"/></svg>
<svg class="b" style="left:1518px;top:241px" width="16" height="16" viewBox="0 0 16 16"><path d="M2 4.6C4 1.2 12 1.2 14 4.6" fill="none" stroke="#555" stroke-width="2.2"/><ellipse cx="2.6" cy="5" rx="1.9" ry="1.5" fill="#555"/><ellipse cx="13.4" cy="5" rx="1.9" ry="1.5" fill="#555"/><path d="M1.5 8.7h13" stroke="#555" stroke-width="1.5" stroke-dasharray="1.6 0.9"/><path d="M2.5 11.4h11" stroke="#555" stroke-width="1.5" stroke-dasharray="1.6 1.2"/><path d="M1.5 14.1h1.6M4 14.1h8M12.9 14.1h1.6" stroke="#555" stroke-width="1.8"/></svg>
<svg class="b" style="left:1518px;top:277px" width="16" height="16" viewBox="0 0 16 16"><rect x="1.5" y="3" width="13" height="12" rx="1" fill="none" stroke="#555" stroke-width="1.5"/><path d="M1.5 6h13" stroke="#555" stroke-width="1.5"/><path d="M4.5 1v3M11.5 1v3" stroke="#555" stroke-width="1.6"/><path d="M4 9h8M4 12h8" stroke="#555" stroke-width="1.3" stroke-dasharray="1.4 1.1"/></svg>
<svg class="b" style="left:1517px;top:312px" width="18" height="17" viewBox="0 0 18 17"><circle cx="9" cy="5.8" r="4.2" fill="none" stroke="#555" stroke-width="1.5"/><path d="M4.5 10.6C2.6 11.3 1.8 12.5 1.8 13.6a2 2 0 0 0 2 2h10.4a2 2 0 0 0 2-2c0-1.1-.8-2.3-2.7-3" fill="none" stroke="#555" stroke-width="1.5" stroke-linejoin="round"/></svg>
<svg class="b" style="left:1567px;top:162.3px" width="8" height="11" viewBox="0 0 8 11"><path d="M1.5 1.5l4 4-4 4" fill="none" stroke="#444" stroke-width="2"/></svg>
<div class="t" style="left:1582.7px;top:160.45px;font-size:14px;color:#444;transform:scaleX(0.9645);">Commentaire</div>
<div class="b" style="left:1568px;top:177.3px;width:317px;height:1px;background:#a8a8a8;"></div>
<div class="b" style="left:1583px;top:188px;width:302px;height:104px;background:#fff;border:1px solid #dcdcdc;border-radius:4px;box-sizing:border-box;"></div>
<div class="t" style="left:1589px;top:200.15px;font-size:14px;color:#444;transform:scaleX(0.8330);-webkit-text-stroke:0.6px #444;">Le 28/06/2019 par V. LOUVET :</div>
<svg class="b" style="left:1857px;top:199px" width="18" height="16" viewBox="0 0 18 16"><path d="M8.6 2H2.4A1.4 1.4 0 0 0 1 3.4v8A1.4 1.4 0 0 0 2.4 12.8h8.2A1.4 1.4 0 0 0 12 11.4V8.6" fill="none" stroke="#3ab0c6" stroke-width="1.885"/><path d="M5.4 10.3l.5-2.9 6.3-6.3a1.1 1.1 0 0 1 1.5 0l1 1a1.1 1.1 0 0 1 0 1.5L8.4 9.9z" fill="none" stroke="#3ab0c6" stroke-width="1.6900000000000002" stroke-linejoin="round"/><path d="M11.2 2.2l2.5 2.5" stroke="#3ab0c6" stroke-width="1.4300000000000002"/></svg>
<div class="t" style="left:1589px;top:223.30px;font-size:15px;color:#555;transform:scaleX(0.8452);-webkit-text-stroke:0.25px #555;">Ajouter un commentaire à la demande</div>
<div class="t" style="left:1589px;top:270.80px;font-size:15px;color:#555;transform:scaleX(0.8497);-webkit-text-stroke:0.25px #555;">Ajouter une info supplémentaire</div>
<div class="b" style="left:1785px;top:302px;width:100px;height:30px;background:#d4d4d6;"></div>
<div class="t" style="left:1792.5px;top:310.15px;font-size:14px;color:#444;transform:scaleX(0.9841);">Historique</div>
<svg class="b" style="left:1860px;top:309px" width="16" height="16" viewBox="0 0 16 16"><path d="M3 8a5.5 5.5 0 1 0 1.6-3.9" fill="none" stroke="#444" stroke-width="1.8"/><path d="M1.5 1.8v4.2h4.2z" fill="#444"/><path d="M8.5 5v3.3l2.2 1.6" fill="none" stroke="#444" stroke-width="1.6"/></svg>
<svg class="b" style="left:1567px;top:337.4px" width="8" height="11" viewBox="0 0 8 11"><path d="M1.5 1.5l4 4-4 4" fill="none" stroke="#444" stroke-width="2"/></svg>
<div class="t" style="left:1582.7px;top:335.55px;font-size:14px;color:#444;transform:scaleX(0.9744);">Contact</div>
<div class="b" style="left:1568px;top:352.4px;width:317px;height:1px;background:#a8a8a8;"></div>
<div class="b" style="left:1568px;top:363px;width:317px;height:73px;background:#f0f0f4;"></div>
<div class="t" style="left:1582.7px;top:374.15px;font-size:14px;color:#555;transform:scaleX(0.9641);">Téléphone fixe :</div>
<div class="t" style="left:1732.5px;top:372.11px;font-size:17px;color:#555;transform:scaleX(0.7583);-webkit-text-stroke:0.25px #555;">01 23 45 67 89</div>
<div class="t" style="left:1582.7px;top:411.15px;font-size:14px;color:#555;transform:scaleX(0.9738);">Téléphone portable :</div>
<div class="t" style="left:1732.5px;top:409.11px;font-size:17px;color:#555;transform:scaleX(0.7583);-webkit-text-stroke:0.25px #555;">06 23 45 67 89</div>
<svg class="b" style="left:1567px;top:461.8px" width="8" height="11" viewBox="0 0 8 11"><path d="M1.5 1.5l4 4-4 4" fill="none" stroke="#444" stroke-width="2"/></svg>
<div class="t" style="left:1582.7px;top:459.95px;font-size:14px;color:#444;transform:scaleX(0.9805);">Planification</div>
<div class="b" style="left:1568px;top:476.8px;width:317px;height:1px;background:#a8a8a8;"></div>
<div class="b" style="left:1733px;top:488px;width:152px;height:36px;background:#fff;border:1px solid #dcdcdc;border-radius:4px;box-sizing:border-box;"></div>
<div class="t" style="left:1582.8px;top:499.65px;font-size:14px;color:#555;transform:scaleX(0.9679);">Antenne :</div>
<div class="t" style="left:1739px;top:498.80px;font-size:15px;color:#555;transform:scaleX(0.8085);-webkit-text-stroke:0.25px #555;">BRIANCON</div>
<svg class="b" style="left:1857px;top:499px" width="18" height="16" viewBox="0 0 18 16"><path d="M8.6 2H2.4A1.4 1.4 0 0 0 1 3.4v8A1.4 1.4 0 0 0 2.4 12.8h8.2A1.4 1.4 0 0 0 12 11.4V8.6" fill="none" stroke="#3ab0c6" stroke-width="1.885"/><path d="M5.4 10.3l.5-2.9 6.3-6.3a1.1 1.1 0 0 1 1.5 0l1 1a1.1 1.1 0 0 1 0 1.5L8.4 9.9z" fill="none" stroke="#3ab0c6" stroke-width="1.6900000000000002" stroke-linejoin="round"/><path d="M11.2 2.2l2.5 2.5" stroke="#3ab0c6" stroke-width="1.4300000000000002"/></svg>
<div class="b" style="left:1733px;top:534px;width:152px;height:36px;background:#fff;border:1px solid #dcdcdc;border-radius:4px;box-sizing:border-box;"></div>
<div class="t" style="left:1582.8px;top:545.65px;font-size:14px;color:#555;transform:scaleX(0.9327);">Délai :</div>
<div class="t" style="left:1739px;top:546.50px;font-size:13px;color:#555;transform:scaleX(0.8639);-webkit-text-stroke:0.25px #555;">23</div>
<svg class="b" style="left:1857px;top:545px" width="18" height="16" viewBox="0 0 18 16"><path d="M8.6 2H2.4A1.4 1.4 0 0 0 1 3.4v8A1.4 1.4 0 0 0 2.4 12.8h8.2A1.4 1.4 0 0 0 12 11.4V8.6" fill="none" stroke="#3ab0c6" stroke-width="1.885"/><path d="M5.4 10.3l.5-2.9 6.3-6.3a1.1 1.1 0 0 1 1.5 0l1 1a1.1 1.1 0 0 1 0 1.5L8.4 9.9z" fill="none" stroke="#3ab0c6" stroke-width="1.6900000000000002" stroke-linejoin="round"/><path d="M11.2 2.2l2.5 2.5" stroke="#3ab0c6" stroke-width="1.4300000000000002"/></svg>
<div class="b" style="left:1733px;top:580px;width:152px;height:36px;background:#fff;border:1px solid #dcdcdc;border-radius:4px;box-sizing:border-box;"></div>
<div class="t" style="left:1582.8px;top:591.65px;font-size:14px;color:#555;transform:scaleX(0.9902);">Date programmation :</div>
<div class="t" style="left:1739px;top:590.80px;font-size:15px;color:#555;transform:scaleX(0.8489);-webkit-text-stroke:0.25px #555;">à programmer</div>
<svg class="b" style="left:1857px;top:591px" width="18" height="16" viewBox="0 0 18 16"><path d="M8.6 2H2.4A1.4 1.4 0 0 0 1 3.4v8A1.4 1.4 0 0 0 2.4 12.8h8.2A1.4 1.4 0 0 0 12 11.4V8.6" fill="none" stroke="#3ab0c6" stroke-width="1.885"/><path d="M5.4 10.3l.5-2.9 6.3-6.3a1.1 1.1 0 0 1 1.5 0l1 1a1.1 1.1 0 0 1 0 1.5L8.4 9.9z" fill="none" stroke="#3ab0c6" stroke-width="1.6900000000000002" stroke-linejoin="round"/><path d="M11.2 2.2l2.5 2.5" stroke="#3ab0c6" stroke-width="1.4300000000000002"/></svg>
<svg class="b" style="left:1567px;top:641.5px" width="8" height="11" viewBox="0 0 8 11"><path d="M1.5 1.5l4 4-4 4" fill="none" stroke="#444" stroke-width="2"/></svg>
<div class="t" style="left:1582.7px;top:639.65px;font-size:14px;color:#444;transform:scaleX(0.9179);">Patient</div>
<div class="b" style="left:1568px;top:656.5px;width:317px;height:1px;background:#a8a8a8;"></div>
<div class="t" style="left:1582.5px;top:672.55px;font-size:14px;color:#555;transform:scaleX(0.9866);">N° Patient :</div>
<div class="t" style="left:1732.8px;top:672.55px;font-size:14px;color:#555;transform:scaleX(0.7925);-webkit-text-stroke:0.25px #555;">134875</div>
<svg class="b" style="left:1780px;top:671px" width="17" height="15" viewBox="0 0 17 15"><path d="M10.5 3.3H2.8a1.2 1.2 0 0 0-1.2 1.2v8a1.2 1.2 0 0 0 1.2 1.2h8a1.2 1.2 0 0 0 1.2-1.2V8" fill="none" stroke="#555" stroke-width="1.6"/><path d="M7 10L14.3 2.7" stroke="#555" stroke-width="1.9"/><path d="M11.2 0.8h5v5z" fill="#555"/></svg>
<div class="t" style="left:1582.5px;top:696.55px;font-size:14px;color:#555;transform:scaleX(0.9388);">Civilité :</div>
<div class="t" style="left:1732.8px;top:695.70px;font-size:15px;color:#555;transform:scaleX(0.8000);-webkit-text-stroke:0.25px #555;">M</div>
<div class="t" style="left:1582.5px;top:720.55px;font-size:14px;color:#555;transform:scaleX(1.0180);">Nom :</div>
<div class="t" style="left:1732.8px;top:719.70px;font-size:15px;color:#555;transform:scaleX(0.8564);-webkit-text-stroke:0.25px #555;">venenatis</div>
<div class="t" style="left:1582.5px;top:744.55px;font-size:14px;color:#555;transform:scaleX(0.9334);">Prénom :</div>
<div class="t" style="left:1732.8px;top:743.70px;font-size:15px;color:#555;transform:scaleX(0.8568);-webkit-text-stroke:0.25px #555;">sagittis</div>
<svg class="b" style="left:1567px;top:788.7px" width="8" height="11" viewBox="0 0 8 11"><path d="M1.5 1.5l4 4-4 4" fill="none" stroke="#444" stroke-width="2"/></svg>
<div class="t" style="left:1582.7px;top:786.85px;font-size:14px;color:#444;transform:scaleX(0.9760);">Coordonnées</div>
<div class="b" style="left:1568px;top:803.7px;width:317px;height:1px;background:#a8a8a8;"></div>
<div class="t" style="left:1582.5px;top:819.75px;font-size:14px;color:#555;transform:scaleX(0.9471);">Adresse :</div>
<div class="t" style="left:1732.8px;top:815.40px;font-size:15px;color:#555;transform:scaleX(0.8363);-webkit-text-stroke:0.25px #555;">amet congue sapien</div>
<div class="t" style="left:1582.5px;top:843.75px;font-size:14px;color:#555;transform:scaleX(0.9943);">Code postal :</div>
<div class="t" style="left:1732.8px;top:843.75px;font-size:14px;color:#555;transform:scaleX(0.7968);-webkit-text-stroke:0.25px #555;">12345</div>
<div class="t" style="left:1582.5px;top:867.75px;font-size:14px;color:#555;transform:scaleX(0.9710);">Ville :</div>
<div class="t" style="left:1732.8px;top:866.90px;font-size:15px;color:#555;transform:scaleX(0.8300);-webkit-text-stroke:0.25px #555;">posuere</div>
<div class="b" style="left:1568px;top:906px;width:165px;height:40px;background:#3ab0c6;"></div>
<div class="t" style="left:1587px;top:919.15px;font-size:14px;color:#fff;transform:scaleX(1.0060);-webkit-text-stroke:0.3px #fff;">Annuler la demande</div>
<div class="b" style="left:772px;top:948px;width:166px;height:20px;background:#fff;border:1px solid #767676;box-sizing:border-box;box-shadow:2px 2px 2px rgba(0,0,0,.35);"></div>
<div class="t" style="left:779px;top:951.34px;font-size:12px;color:#333;transform:scaleX(0.9657);">Connexion Bureau à distance</div>
</body></html>
